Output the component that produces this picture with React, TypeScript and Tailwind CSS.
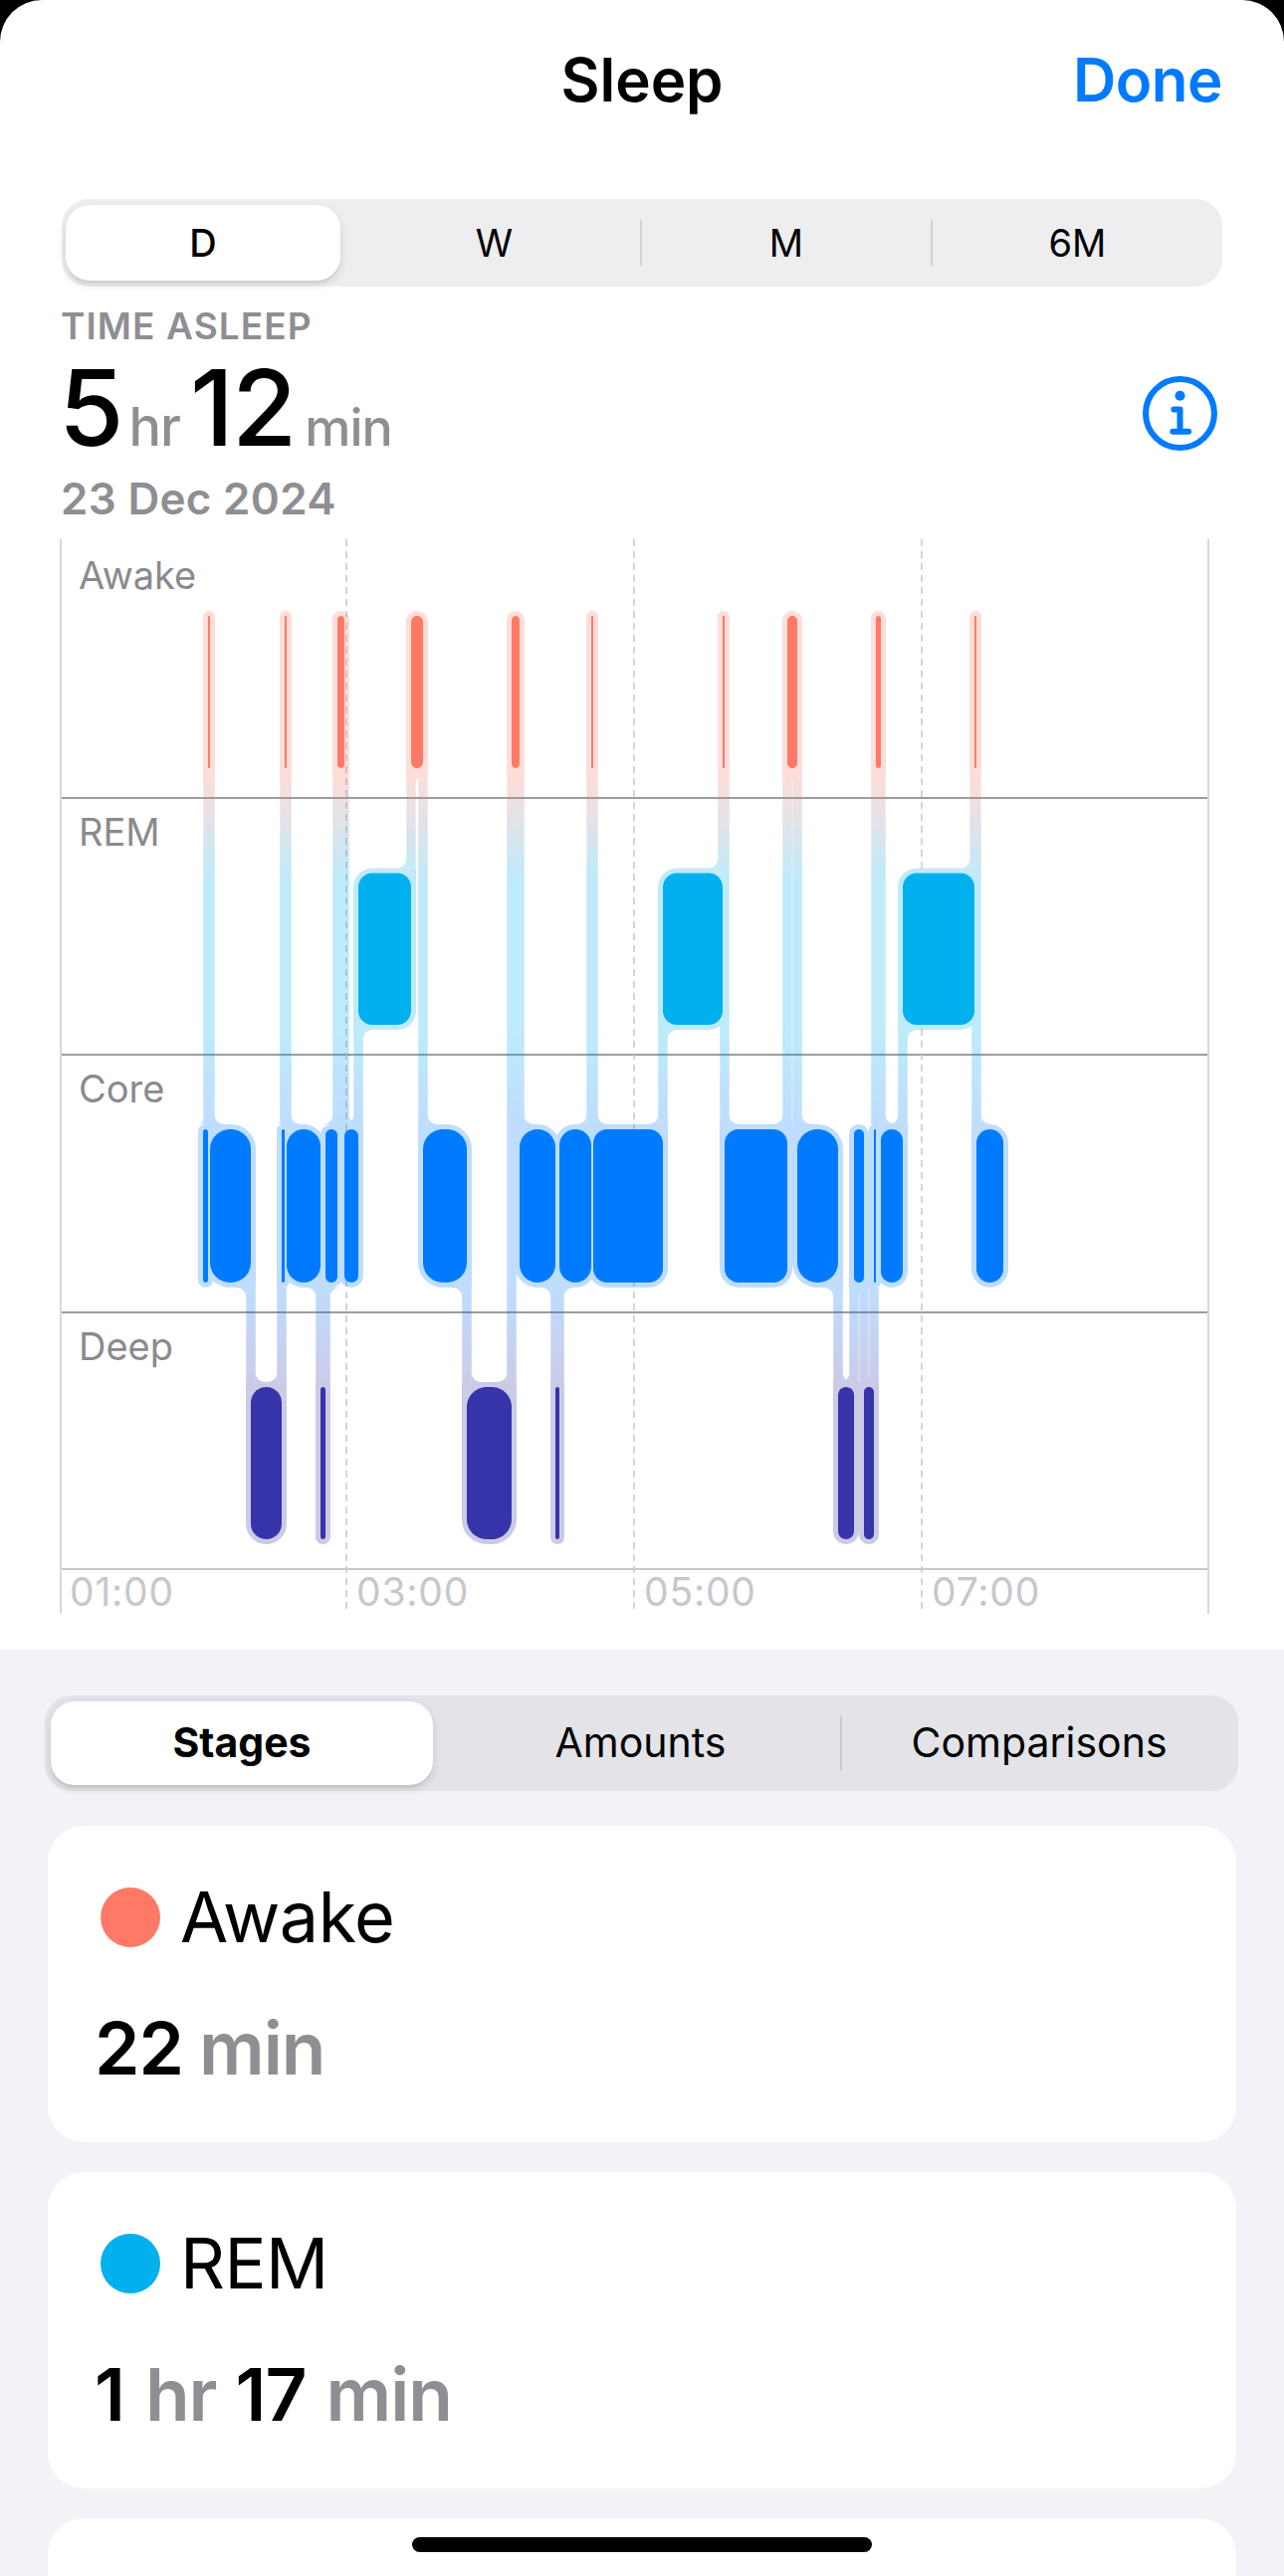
import React from "react";

type Stage = "awake" | "rem" | "core" | "deep";

const COLOR: Record<Stage, string> = { awake: "#FF7A66", rem: "#00B1EE", core: "#007BFF", deep: "#3634A8" };
const ROW: Record<Stage, [number, number]> = { awake: [619, 772], rem: [877.5, 1030], core: [1135, 1289], deep: [1394, 1547] };
const LEVEL: Record<Stage, number> = { awake: 0, rem: 1, core: 2, deep: 3 };

const SEGS: [Stage, number, number][] = [
  ["core", 204, 209], ["awake", 209, 211], ["core", 211, 252], ["deep", 252, 283], ["core", 283, 286], ["awake", 286, 288],
  ["core", 288, 322], ["deep", 322, 327], ["core", 327, 339], ["awake", 339, 346], ["core", 346, 360], ["rem", 360, 413],
  ["awake", 413, 425], ["core", 425, 469], ["deep", 469, 514], ["awake", 514, 522], ["core", 522, 558], ["deep", 558, 562],
  ["core", 562, 594], ["awake", 594, 596], ["core", 596, 666], ["rem", 666, 726], ["awake", 726, 728], ["core", 728, 791],
  ["awake", 791, 801], ["core", 801, 842], ["deep", 842, 858], ["core", 858, 868], ["deep", 868, 878], ["core", 878, 880],
  ["awake", 880, 885], ["core", 885, 907], ["rem", 907, 979], ["awake", 979, 981], ["core", 981, 1008],
];

const PAD = 5;
const HALF = 4.75;
const barRadius = (w: number) => (w >= 50 ? 14 : w >= 40 ? 20 : w / 2);

function rr(x0: number, y0: number, x1: number, y1: number, tl: number, tr: number, br: number, bl: number) {
  const k = 0.45;
  const c = (r: number) => r * k;
  return `M${x0 + tl} ${y0}L${x1 - tr} ${y0}C${x1 - c(tr)} ${y0} ${x1} ${y0 + c(tr)} ${x1} ${y0 + tr}L${x1} ${y1 - br}C${x1} ${y1 - c(br)} ${x1 - c(br)} ${y1} ${x1 - br} ${y1}L${x0 + bl} ${y1}C${x0 + c(bl)} ${y1} ${x0} ${y1 - c(bl)} ${x0} ${y1 - bl}L${x0} ${y0 + tl}C${x0} ${y0 + c(tl)} ${x0 + c(tl)} ${y0} ${x0 + tl} ${y0}Z`;
}

function Chart() {
  const halos: React.ReactNode[] = [];
  const bars: React.ReactNode[] = [];
  SEGS.forEach(([s, x0, x1], i) => {
    const [y0, y1] = ROW[s];
    const r = barRadius(x1 - x0);
    const R = r + PAD;
    const prev = SEGS[i - 1];
    const next = SEGS[i + 1];
    const prevUp = prev && LEVEL[prev[0]] < LEVEL[s];
    const prevDown = prev && LEVEL[prev[0]] > LEVEL[s];
    const nextUp = next && LEVEL[next[0]] < LEVEL[s];
    const nextDown = next && LEVEL[next[0]] > LEVEL[s];
    halos.push(
      <path
        key={`h${i}`}
        d={rr(x0 - PAD, y0 - PAD, x1 + PAD, y1 + PAD, prevUp ? 0 : R, nextUp ? 0 : R, nextDown ? 0 : R, prevDown ? 0 : R)}
      />
    );
    bars.push(<path key={`b${i}`} d={rr(x0, y0, x1, y1, r, r, r, r)} fill={COLOR[s]} />);
    if (next) {
      const [ns, , nx1] = next;
      const up = LEVEL[ns] < LEVEL[s];
      const x = x1;
      const aEdge = up ? y0 - PAD : y1 + PAD;
      const [ny0, ny1] = ROW[ns];
      const bEdge = up ? ny1 + PAD : ny0 - PAD;
      const top = Math.min(aEdge, bEdge);
      const h = Math.abs(aEdge - bEdge);
      halos.push(<rect key={`c${i}`} x={x - HALF} y={top} width={HALF * 2} height={h} />);
      const lx = x - HALF;
      const rx = x + HALF;
      const ra = Math.min(11, lx - (x0 - PAD));
      const rb = Math.min(11, nx1 + PAD - rx);
      const dy = up ? -1 : 1;
      if (ra > 0)
        halos.push(<path key={`fa${i}`} d={`M${lx} ${aEdge}L${lx - ra} ${aEdge}Q${lx} ${aEdge} ${lx} ${aEdge + dy * ra}Z`} />);
      if (rb > 0)
        halos.push(<path key={`fb${i}`} d={`M${rx} ${bEdge}L${rx + rb} ${bEdge}Q${rx} ${bEdge} ${rx} ${bEdge - dy * rb}Z`} />);
    }
  });
  return (
    <svg className="absolute left-0 top-0" width={1155} height={1080} viewBox="60 542 1155 1080">
      <defs>
        <linearGradient id="flow" gradientUnits="userSpaceOnUse" x1="0" x2="0" y1="777" y2="1389">
          <stop offset="0" stopColor={COLOR.awake} />
          <stop offset="0.176" stopColor={COLOR.rem} />
          <stop offset="0.42" stopColor={COLOR.rem} />
          <stop offset="0.578" stopColor={COLOR.core} />
          <stop offset="0.843" stopColor={COLOR.core} />
          <stop offset="1" stopColor={COLOR.deep} />
        </linearGradient>
      </defs>
      {[348, 637, 926].map((x) => (
        <line key={x} x1={x} x2={x} y1={542} y2={1622} stroke="#C7C7CC" strokeWidth={1.5} strokeDasharray="7 5" />
      ))}
      <g opacity={0.25} fill="url(#flow)">
        {halos}
      </g>
      {bars}
    </svg>
  );
}

const FONT = "font-['Inter','Liberation_Sans',sans-serif]";

function Row({ label, className }: { label: string; className: string }) {
  return (
    <div className={`border-b-2 border-[#9C9CA0] pl-[17px] text-[38px] leading-[36px] text-[#8A8A8E] ${className}`}>{label}</div>
  );
}

function Card({ dot, title, children }: { dot: string; title: string; children: React.ReactNode }) {
  return (
    <div className="mx-[48px] mb-[30px] h-[318px] shrink-0 rounded-[36px] bg-white pl-[53px] pt-[62px]">
      <div className="flex items-center gap-[20px]">
        <div className={`h-[60px] w-[60px] rounded-full ${dot}`} />
        <div className="text-[70px] leading-[60px] tracking-[-0.5px] text-black">{title}</div>
      </div>
      <div className="mt-[66px] ml-[-6px] text-[73px] font-semibold leading-[72px] tracking-[-1px] text-black">{children}</div>
    </div>
  );
}

export default function App() {
  return (
    <div className={`relative h-[2589px] w-[1290px] overflow-hidden bg-black ${FONT}`}>
      <div className="flex h-full flex-col overflow-hidden rounded-t-[42px] bg-white">
        <div className="relative h-[200px] shrink-0">
          <div className="pt-[45px] text-center text-[60px] font-semibold leading-[70px] tracking-[0px] text-black">Sleep</div>
          <div className="absolute right-[62px] top-[45px] text-[60px] font-semibold leading-[70px] tracking-[-0.5px] text-[#007AFF]">Done</div>
        </div>

        <div className="relative mx-[62px] flex h-[88px] shrink-0 items-center rounded-[27px] bg-[#EEEEF0] p-[4px] text-[38px] text-black">
          <div className="flex h-[76px] w-[276px] items-center justify-center rounded-[24px] bg-white font-medium shadow-[0_4px_10px_rgba(0,0,0,0.12),0_3px_1px_rgba(0,0,0,0.04)]">D</div>
          <div className="flex w-[301px] items-center justify-center pl-[8px]">W</div>
          <div className="h-[46px] w-[2px] bg-[#D1D1D6]" />
          <div className="flex w-[290px] items-center justify-center">M</div>
          <div className="h-[46px] w-[2px] bg-[#D1D1D6]" />
          <div className="flex flex-1 items-center justify-center pl-[4px]">6M</div>
        </div>

        <div className="ml-[61px] mt-[20px] text-[37px] font-semibold leading-[40px] tracking-[1.1px] text-[#8E8E93]">TIME ASLEEP</div>
        <div className="ml-[59px] mr-[67px] mt-[26px] flex h-[92px] items-center justify-between">
          <div className="flex items-baseline text-[106px] font-medium leading-[92px] tracking-[-2px] text-black">
            <span>5</span>
            <span className="ml-[7px] text-[54px] tracking-[-1px] text-[#8E8E93]">hr</span>
            <span className="ml-[10px]">12</span>
            <span className="ml-[10px] text-[52px] tracking-[-1px] text-[#8E8E93]">min</span>
          </div>
          <svg width="75" height="75" viewBox="0 0 74 74" fill="none" stroke="#007AFF" strokeWidth="6" className="mt-[-10px]">
            <circle cx="37" cy="37" r="34" />
            <circle cx="37" cy="19.5" r="5" fill="#007AFF" stroke="none" />
            <path d="M31 33h6v22M30 55h15.5" strokeLinecap="round" strokeLinejoin="round" />
          </svg>
        </div>
        <div className="ml-[61px] mt-[11px] text-[44px] font-semibold leading-[48px] tracking-[0.3px] text-[#8E8E93]">23 Dec 2024</div>

        <div className="relative ml-[60px] mt-[17px] h-[1080px] w-[1155px] shrink-0 border-x-2 border-[#D8D8DC]">
          <Row label="Awake" className="h-[261px] pt-[18px]" />
          <Row label="REM" className="h-[258px] pt-[15px]" />
          <Row label="Core" className="h-[259px] pt-[15px]" />
          <Row label="Deep" className="h-[258px] pt-[15px] border-[#C7C7CC]" />
          <div className="flex text-[39px] leading-[44px] tracking-[0.8px] text-[#C7C7CC]">
            <div className="w-[288px] pl-[8px]">01:00</div>
            <div className="w-[289px] pl-[8px]">03:00</div>
            <div className="w-[289px] pl-[8px]">05:00</div>
            <div className="pl-[8px]">07:00</div>
          </div>
          <div className="absolute left-[-2px] top-0">
            <Chart />
          </div>
        </div>

        <div className="mt-[36px] flex-1 bg-[#F2F2F7]">
          <div className="relative mx-[45px] mt-[46px] flex h-[96px] w-[1199px] items-center rounded-[27px] bg-[#E3E3E8] p-[6px] text-[41px] text-black">
            <div className="flex h-[84px] w-[384px] items-center justify-center rounded-[24px] bg-white font-bold shadow-[0_4px_10px_rgba(0,0,0,0.12),0_3px_1px_rgba(0,0,0,0.04)]">Stages</div>
            <div className="flex w-[409px] items-center justify-center pl-[8px]">Amounts</div>
            <div className="h-[54px] w-[2px] bg-[#C7C7CC]" />
            <div className="flex flex-1 items-center justify-center pl-[4px]">Comparisons</div>
          </div>
          <div className="mt-[35px] flex flex-col">
            <Card dot="bg-[#FF7A66]" title="Awake">
              22<span className="ml-[16px] text-[#8E8E93]">min</span>
            </Card>
            <Card dot="bg-[#00B1EE]" title="REM">
              1<span className="ml-[21px] text-[#8E8E93]">hr</span>
              <span className="ml-[19px]">17</span>
              <span className="ml-[20px] text-[#8E8E93]">min</span>
            </Card>
            <div className="mx-[48px] h-[318px] shrink-0 rounded-[36px] bg-white" />
          </div>
        </div>
      </div>
      <div className="absolute left-[414px] top-[2550px] h-[15px] w-[462px] rounded-full bg-black" />
    </div>
  );
}
